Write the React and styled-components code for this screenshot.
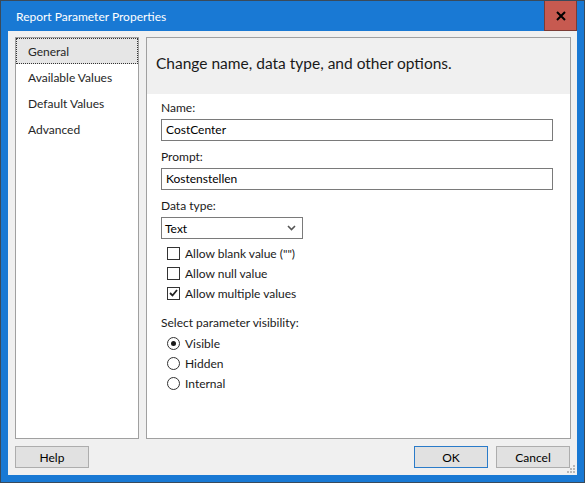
import React from 'react';
import styled, {createGlobalStyle} from 'styled-components';

const GlobalStyle = createGlobalStyle`
  html, body {
    margin: 0;
    padding: 0;
    background: #ffffff;
  }
  body {
    font-family: Lato, "Noto Sans", "Liberation Sans", sans-serif;
    font-size: 12px;
    color: #1a1a1a;
  }
`;

const Window = styled.div`
  box-sizing: border-box;
  width: 585px;
  height: 483px;
  border: 1px solid #3a4a5a;
  background: #1979d4;
  padding: 0 7px 7px 7px;
  display: flex;
  flex-direction: column;
`;

const TitleBar = styled.div`
  height: 30px;
  display: flex;
  align-items: center;
  justify-content: space-between;
`;

const Title = styled.span`
  color: #ffffff;
  font-size: 12px;
  padding-left: 8px;
  padding-top: 1px;
`;

const CloseButton = styled.div`
  box-sizing: border-box;
  width: 33px;
  height: 30px;
  background: #c75a50;
  border: 1px solid #7a3b35;
  border-top: none;
  display: flex;
  align-items: center;
  justify-content: center;
`;

const Body = styled.div`
  flex: 1;
  background: #f0f0f0;
  display: flex;
  flex-direction: column;
  position: relative;
  min-height: 0;
`;

const Main = styled.div`
  flex: 1;
  display: flex;
  gap: 7px;
  padding: 6px 6px 0 7px;
  min-height: 0;
`;

const NavList = styled.div`
  box-sizing: border-box;
  width: 124px;
  background: #ffffff;
  border: 1px solid #a0a0a0;
  display: flex;
  flex-direction: column;
`;

const NavItem = styled.div`
  box-sizing: border-box;
  height: 26px;
  line-height: 24px;
  padding: 1px 0 0 11px;
  border: ${p => (p.$selected ? '1px dotted #333' : '1px solid transparent')};
  background: ${p => (p.$selected ? '#e6e6e6' : 'transparent')};
  color: #262626;
`;

const Panel = styled.div`
  box-sizing: border-box;
  flex: 1;
  background: #ffffff;
  border: 1px solid #a0a0a0;
  display: flex;
  flex-direction: column;
`;

const PanelHeader = styled.div`
  box-sizing: border-box;
  height: 56px;
  background: #f0f0f0;
  padding: 15px 0 0 9px;
  line-height: 20px;
  font-size: 15.5px;
  color: #1a1a1a;
`;

const Form = styled.div`
  padding: 6px 17px 0 14px;
  display: flex;
  flex-direction: column;
`;

const Label = styled.div`
  height: 16px;
  line-height: 16px;
  margin-top: ${p => p.$top || 0}px;
  color: #1a1a1a;
`;

const TextInput = styled.div`
  box-sizing: border-box;
  height: 22px;
  margin-top: 3px;
  border: 1px solid #7a7a7a;
  padding-left: 4px;
  line-height: 20px;
  color: #000;
`;

const Select = styled.div`
  box-sizing: border-box;
  width: 142px;
  height: 22px;
  margin-top: 3px;
  border: 1px solid #7a7a7a;
  padding: 0 6px 0 3px;
  display: flex;
  align-items: center;
  justify-content: space-between;
  color: #000;
`;

const OptionList = styled.div`
  display: flex;
  flex-direction: column;
  margin-top: ${p => p.$top || 0}px;
  padding-left: 6px;
`;

const OptionRow = styled.div`
  height: 20px;
  display: flex;
  align-items: center;
  gap: 5px;
  color: #1a1a1a;
`;

const CheckBox = styled.span`
  box-sizing: border-box;
  width: 13px;
  height: 13px;
  border: 1px solid #333;
  background: #fff;
  display: flex;
  align-items: center;
  justify-content: center;
`;

const Radio = styled.span`
  box-sizing: border-box;
  width: 13px;
  height: 13px;
  border-radius: 50%;
  border: 1px solid #333;
  background: #fff;
  display: flex;
  align-items: center;
  justify-content: center;
  &::after {
    content: '';
    width: 5px;
    height: 5px;
    border-radius: 50%;
    background: ${p => (p.$checked ? '#1a1a1a' : 'transparent')};
  }
`;

const Footer = styled.div`
  display: flex;
  align-items: center;
  gap: 8px;
  padding: 7px 7px 7px 7px;
`;

const Button = styled.div`
  box-sizing: border-box;
  width: 74px;
  height: 22px;
  background: #e1e1e1;
  border: 1px solid ${p => (p.$default ? '#2a7bc9' : '#adadad')};
  display: flex;
  align-items: center;
  justify-content: center;
  color: #000;
`;

const Spacer = styled.div`
  flex: 1;
`;

const Grip = styled.svg`
  position: absolute;
  right: 1px;
  bottom: 1px;
`;

const CheckMark = () => (
  <svg width="9" height="8" viewBox="0 0 9 8">
    <path d="M1 4 L3.5 6.5 L8 1" fill="none" stroke="#222" strokeWidth="1.8" />
  </svg>
);

const Chevron = () => (
  <svg width="9" height="6" viewBox="0 0 9 6">
    <path d="M1 1 L4.5 4.5 L8 1" fill="none" stroke="#555" strokeWidth="1.6" />
  </svg>
);

const navItems = ['General', 'Available Values', 'Default Values', 'Advanced'];

const checks = [
  {label: 'Allow blank value ("")', checked: false},
  {label: 'Allow null value', checked: false},
  {label: 'Allow multiple values', checked: true},
];

const radios = [
  {label: 'Visible', checked: true},
  {label: 'Hidden', checked: false},
  {label: 'Internal', checked: false},
];

export default function App() {
  return (
    <>
      <GlobalStyle/>
      <Window>
        <TitleBar>
          <Title>Report Parameter Properties</Title>
          <CloseButton>
            <svg width="10" height="10" viewBox="0 0 10 10">
              <path d="M1 1 L9 9 M9 1 L1 9" stroke="#000" strokeWidth="2"/>
            </svg>
          </CloseButton>
        </TitleBar>
        <Body>
          <Main>
            <NavList>
              {navItems.map((item, i) => (
                <NavItem key={item} $selected={i === 0}>{item}</NavItem>
              ))}
            </NavList>
            <Panel>
              <PanelHeader>Change name, data type, and other options.</PanelHeader>
              <Form>
                <Label>Name:</Label>
                <TextInput>CostCenter</TextInput>
                <Label $top={8}>Prompt:</Label>
                <TextInput>Kostenstellen</TextInput>
                <Label $top={8}>Data type:</Label>
                <Select>
                  <span>Text</span>
                  <Chevron/>
                </Select>
                <OptionList $top={4}>
                  {checks.map(c => (
                    <OptionRow key={c.label}>
                      <CheckBox>{c.checked && <CheckMark/>}</CheckBox>
                      {c.label}
                    </OptionRow>
                  ))}
                </OptionList>
                <Label $top={12}>Select parameter visibility:</Label>
                <OptionList $top={2}>
                  {radios.map(r => (
                    <OptionRow key={r.label}>
                      <Radio $checked={r.checked}/>
                      {r.label}
                    </OptionRow>
                  ))}
                </OptionList>
              </Form>
            </Panel>
          </Main>
          <Footer>
            <Button>Help</Button>
            <Spacer/>
            <Button $default>OK</Button>
            <Button>Cancel</Button>
          </Footer>
          <Grip width="9" height="9" viewBox="0 0 9 9">
            <g fill="#b8b8b8">
              <rect x="6" y="0" width="2" height="2"/>
              <rect x="3" y="3" width="2" height="2"/>
              <rect x="6" y="3" width="2" height="2"/>
              <rect x="0" y="6" width="2" height="2"/>
              <rect x="3" y="6" width="2" height="2"/>
              <rect x="6" y="6" width="2" height="2"/>
            </g>
          </Grip>
        </Body>
      </Window>
    </>
  );
}
